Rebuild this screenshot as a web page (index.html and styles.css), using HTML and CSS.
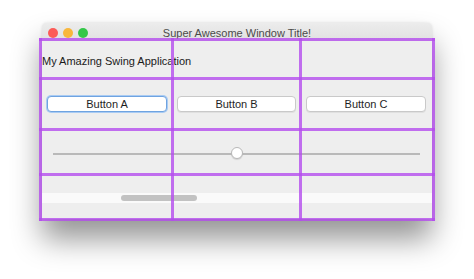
FILE: index.html
```html
<!DOCTYPE html>
<html>
<head>
<meta charset="utf-8">
<link rel="stylesheet" href="styles.css">
</head>
<body>
<div class="window">
  <div class="titlebar">
    <div class="lights">
      <span class="light red"></span>
      <span class="light yellow"></span>
      <span class="light green"></span>
    </div>
    <div class="title">Super Awesome Window Title!</div>
  </div>
  <div class="content">
    <div class="row row-label"><span class="label">My Amazing Swing Application</span></div>
    <div class="row row-buttons">
      <button class="btn focused">Button A</button>
      <button class="btn">Button B</button>
      <button class="btn">Button C</button>
    </div>
    <div class="row row-slider">
      <div class="track"><span class="thumb"></span></div>
    </div>
    <div class="row row-scroll">
      <div class="strip"><span class="sthumb"></span></div>
    </div>
  </div>
  <div class="overlay">
    <span class="vl v1"></span>
    <span class="vl v2"></span>
    <span class="vl v3"></span>
    <span class="vl v4"></span>
    <span class="hl h1"></span>
    <span class="hl h2"></span>
    <span class="hl h3"></span>
    <span class="hl h4"></span>
    <span class="hl h5"></span>
  </div>
</div>
</body>
</html>
```

FILE: styles.css
```css
html, body {
  margin: 0;
  padding: 0;
  background: #ffffff;
}
body {
  width: 474px;
  height: 279px;
  overflow: hidden;
  font-family: "Liberation Sans", Arial, sans-serif;
}
.window {
  position: relative;
  margin-left: 42px;
  margin-top: 23px;
  width: 390px;
  height: 196px;
  background: #eeeeee;
  border-radius: 5px 5px 0 0;
  box-shadow: 0 20px 30px rgba(0, 0, 0, 0.42), 0 0 3px rgba(0, 0, 0, 0.12);
  display: flex;
  flex-direction: column;
}
.titlebar {
  height: 18px;
  flex: none;
  position: relative;
  display: flex;
  align-items: flex-start;
  background: linear-gradient(#ececec, #e1e1e1);
  border-radius: 5px 5px 0 0;
}
.lights {
  display: flex;
  gap: 5px;
  padding: 5px 0 0 6px;
}
.light {
  width: 10px;
  height: 10px;
  border-radius: 50%;
  display: block;
}
.red { background: #fc5b57; }
.yellow { background: #f8b73c; }
.green { background: #34c748; }
.title {
  flex: 1;
  text-align: center;
  font-size: 11px;
  line-height: 14px;
  padding-top: 3px;
  margin-right: 46px;
  color: #4b4b4b;
}
.content {
  flex: 1;
  display: flex;
  flex-direction: column;
}
.row {
  flex: none;
  display: flex;
}
.row-label {
  height: 39px;
  align-items: center;
}
.label {
  font-size: 11px;
  color: #1a1a1a;
  padding-top: 1px;
}
.row-buttons {
  height: 51px;
  padding: 16px 6px 0 5px;
  box-sizing: border-box;
  gap: 10px;
  align-items: flex-start;
}
.btn {
  width: 120px;
  height: 16px;
  padding: 0;
  margin: 0;
  background: #ffffff;
  border: 1px solid #c9c9c9;
  border-radius: 4px;
  font-family: "Liberation Sans", Arial, sans-serif;
  font-size: 11px;
  line-height: 14px;
  color: #1e1e1e;
  box-shadow: 0 1px 0 rgba(0, 0, 0, 0.06);
}
.btn:nth-child(2) { width: 119px; }
.btn.focused {
  border: 1px solid #6fa3e0;
  box-shadow: 0 0 0 1px #a9cbf3;
}
.row-slider {
  height: 45px;
  padding: 0 12px 0 11px;
  align-items: center;
}
.track {
  flex: 1;
  height: 2px;
  background: #b9b9b9;
  position: relative;
  margin-top: 1px;
}
.thumb {
  position: absolute;
  left: 178px;
  top: -6px;
  width: 12px;
  height: 12px;
  box-sizing: border-box;
  border-radius: 50%;
  background: #ffffff;
  border: 1px solid #b8b8b8;
  box-shadow: 0 1px 1px rgba(0, 0, 0, 0.12);
}
.row-scroll {
  height: 43px;
  padding-top: 17px;
  box-sizing: border-box;
  align-items: flex-start;
}
.strip {
  flex: 1;
  height: 10px;
  background: #fafafa;
  display: flex;
  align-items: center;
  padding-left: 79px;
}
.sthumb {
  width: 76px;
  height: 6px;
  border-radius: 3px;
  background: #c2c2c2;
}
.overlay {
  position: absolute;
  left: -3px;
  top: 15px;
  width: 396px;
  height: 183px;
  display: grid;
  grid-template-columns: 3px 129px 3px 125px 3px 130px 3px;
  grid-template-rows: 3px 36px 3px 48px 3px 42px 3px 42px 3px;
  pointer-events: none;
}
.vl, .hl {
  display: block;
  background: rgba(180, 76, 238, 0.8);
}
.vl { grid-row: 1 / -1; }
.hl { grid-column: 1 / -1; }
.v1 { grid-column: 1; }
.v2 { grid-column: 3; }
.v3 { grid-column: 5; }
.v4 { grid-column: 7; }
.h1 { grid-row: 1; }
.h2 { grid-row: 3; }
.h3 { grid-row: 5; }
.h4 { grid-row: 7; }
.h5 { grid-row: 9; }
```
